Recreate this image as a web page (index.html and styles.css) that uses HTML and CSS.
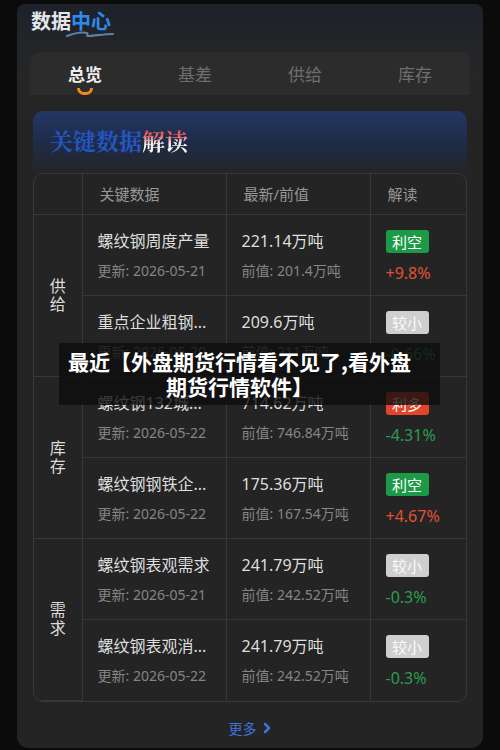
FILE: index.html
```html
<!DOCTYPE html>
<html lang="zh">
<head>
<meta charset="utf-8">
<link rel="stylesheet" href="styles.css">
</head>
<body>
<div class="panel">
  <div class="brand">
    <span class="brand-w">数据</span><span class="brand-b">中心</span>
    <svg class="swoosh" width="50" height="10" viewBox="0 0 50 10"><path d="M2 7 C 10 4, 18 3, 22 4 C 24 5, 20 7, 24 7 C 30 7, 38 5, 48 5" fill="none" stroke="#5c7fa8" stroke-width="2.2" stroke-linecap="round"/></svg>
  </div>
  <div class="tabs">
    <div class="tab active">总览<span class="smile"></span></div>
    <div class="tab">基差</div>
    <div class="tab">供给</div>
    <div class="tab">库存</div>
  </div>
  <div class="card">
    <div class="card-head"><span class="t-blue">关键数据</span><span class="t-red">解读</span></div>
    <div class="table-wrap">
      <table class="tbl">
        <colgroup><col class="c1"><col class="c2"><col class="c3"><col class="c4"></colgroup>
        <thead>
          <tr><th></th><th>关键数据</th><th>最新/前值</th><th>解读</th></tr>
        </thead>
        <tbody>
          <tr>
            <td class="grp" rowspan="2">供<br>给</td>
            <td><div class="l1">螺纹钢周度产量</div><div class="l2">更新: 2026-05-21</div></td>
            <td><div class="l1">221.14万吨</div><div class="l2">前值: 201.4万吨</div></td>
            <td><div class="badge green">利空</div><div class="pct up">+9.8%</div></td>
          </tr>
          <tr>
            <td><div class="l1">重点企业粗钢...</div><div class="l2">更新: 2026-05-20</div></td>
            <td><div class="l1">209.6万吨</div><div class="l2">前值: 211万吨</div></td>
            <td><div class="badge gray">较小</div><div class="pct down">-0.66%</div></td>
          </tr>
          <tr>
            <td class="grp" rowspan="2">库<br>存</td>
            <td><div class="l1">螺纹钢132城...</div><div class="l2">更新: 2026-05-22</div></td>
            <td><div class="l1">714.62万吨</div><div class="l2">前值: 746.84万吨</div></td>
            <td><div class="badge red">利多</div><div class="pct down">-4.31%</div></td>
          </tr>
          <tr>
            <td><div class="l1">螺纹钢钢铁企...</div><div class="l2">更新: 2026-05-22</div></td>
            <td><div class="l1">175.36万吨</div><div class="l2">前值: 167.54万吨</div></td>
            <td><div class="badge green">利空</div><div class="pct up">+4.67%</div></td>
          </tr>
          <tr>
            <td class="grp" rowspan="2">需<br>求</td>
            <td><div class="l1">螺纹钢表观需求</div><div class="l2">更新: 2026-05-21</div></td>
            <td><div class="l1">241.79万吨</div><div class="l2">前值: 242.52万吨</div></td>
            <td><div class="badge gray">较小</div><div class="pct down">-0.3%</div></td>
          </tr>
          <tr>
            <td><div class="l1">螺纹钢表观消...</div><div class="l2">更新: 2026-05-22</div></td>
            <td><div class="l1">241.79万吨</div><div class="l2">前值: 242.52万吨</div></td>
            <td><div class="badge gray">较小</div><div class="pct down">-0.3%</div></td>
          </tr>
        </tbody>
      </table>
    </div>
    <div class="more">更多<svg width="10" height="12" viewBox="0 0 10 12"><path d="M3 2 L7 6 L3 10" fill="none" stroke="#3d72d8" stroke-width="2.6" stroke-linecap="round" stroke-linejoin="round"/></svg></div>
  </div>
  <div class="overlay">最近【外盘期货行情看不见了,看外盘<br>期货行情软件】</div>
</div>
</body>
</html>
```

FILE: styles.css
```css
* { box-sizing: border-box; }
html, body { margin: 0; padding: 0; }
body {
  background: #0b0b0b;
  width: 500px;
  height: 750px;
  overflow: hidden;
  font-family: "Noto Sans", "Noto Sans CJK SC", sans-serif;
}
.panel {
  position: relative;
  margin: 4px 0 0 17px;
  width: 466px;
  height: 744px;
  border-radius: 8px 8px 12px 12px;
  background: linear-gradient(180deg, #1d2129 0px, #232528 40px, #262626 70px, #242424 120px, #242424 100%);
  padding-top: 4px;
}
.brand {
  position: relative;
  margin-left: 14px;
  height: 26px;
  font-size: 20px;
  font-weight: 700;
  line-height: 26px;
  font-family: "Noto Sans CJK SC", sans-serif;
}
.brand-w { color: #e4e6ea; }
.brand-b { color: #2a8cf0; }
.swoosh { position: absolute; left: 34px; top: 21px; }
.tabs {
  display: flex;
  margin: 18px 0 0 13px;
  width: 440px;
  height: 43px;
  background: #2c2c2c;
  border-radius: 10px 10px 0 0;
}
.tab {
  position: relative;
  flex: 1;
  text-align: center;
  font-family: "Noto Sans CJK SC", sans-serif;
  font-size: 17px;
  line-height: 43px;
  color: #6e6e6e;
}
.tab.active { color: #eeeeee; font-weight: 700; }
.smile {
  position: absolute;
  left: 47px;
  top: 36px;
  width: 16px;
  height: 7px;
  border: 3px solid #f08a1c;
  border-top: none;
  border-radius: 0 0 10px 10px;
}
.card { margin: 16px 0 0 16px; width: 434px; }
.card-head {
  height: 62px;
  border-radius: 10px 10px 0 0;
  background: linear-gradient(180deg, #223765 0%, #1f2c48 50%, #232527 100%);
  padding: 14px 0 0 17px;
  font-family: "Noto Serif CJK SC", "Noto Sans CJK SC", serif;
  font-size: 23px;
  font-weight: 700;
  line-height: 32px;
}
.t-blue { color: #2456c4; }
.t-red {
  background: linear-gradient(180deg, #e23a3a 0%, #e86060 35%, #f2f2f2 60%, #ffffff 100%);
  -webkit-background-clip: text;
  background-clip: text;
  color: transparent;
}
.table-wrap {
  border: 1px solid #383838;
  border-radius: 10px;
  overflow: hidden;
  background: #242424;
}
.tbl {
  width: 100%;
  border-collapse: collapse;
  table-layout: fixed;
  font-family: "Noto Sans", "Noto Sans CJK SC", sans-serif;
}
.c1 { width: 48px; }
.c2 { width: 144px; }
.c3 { width: 144px; }
.c4 { width: 96px; }
.tbl th, .tbl td {
  border: 1px solid #383838;
  vertical-align: top;
  text-align: left;
}
.tbl tr:first-child th { border-top: none; }
.tbl th:first-child, .tbl td.grp { border-left: none; }
.tbl th:last-child, .tbl td:last-child { border-right: none; }
.tbl tbody tr:last-child td { border-bottom: none; }
.tbl th {
  height: 40px;
  font-weight: 400;
  font-size: 15px;
  color: #979797;
  padding: 0 0 0 17px;
  vertical-align: middle;
}
.tbl td {
  height: 81px;
  padding: 14px 0 0 15px;
}
.tbl td.grp {
  padding: 0;
  text-align: center;
  vertical-align: middle;
  font-size: 16px;
  line-height: 18px;
  color: #dcdcdc;
}
.l1 {
  font-size: 16px;
  line-height: 24px;
  color: #dedede;
  white-space: nowrap;
}
.l2 {
  margin-top: 9px;
  font-size: 14px;
  line-height: 18px;
  color: #858585;
  white-space: nowrap;
}
.badge {
  width: 43px;
  height: 23px;
  line-height: 23px;
  border-radius: 3px;
  text-align: center;
  font-family: "Noto Sans CJK SC", sans-serif;
  font-size: 15px;
  color: #ffffff;
  margin-top: 1px;
}
.badge.green { background: #1d9a47; }
.badge.gray { background: #cfcfcf; color: #fafafa; }
.badge.red { background: #e2452b; }
.pct {
  margin-top: 11px;
  font-size: 16px;
  line-height: 18px;
}
.pct.up { color: #e05236; }
.pct.down { color: #2c9c52; }
.more {
  display: flex;
  justify-content: center;
  align-items: center;
  gap: 5px;
  margin-top: 17px;
  font-family: "Noto Sans CJK SC", sans-serif;
  font-size: 14px;
  line-height: 18px;
  color: #3d72d8;
}
.overlay {
  position: absolute;
  left: 42px;
  top: 339px;
  width: 381px;
  height: 62px;
  padding: 6px 20px 0 0;
  background: rgba(12, 12, 12, 0.78);
  color: #ffffff;
  text-align: center;
  font-family: "Noto Sans CJK SC", sans-serif;
  font-weight: 700;
  font-size: 21px;
  line-height: 25px;
}
```
